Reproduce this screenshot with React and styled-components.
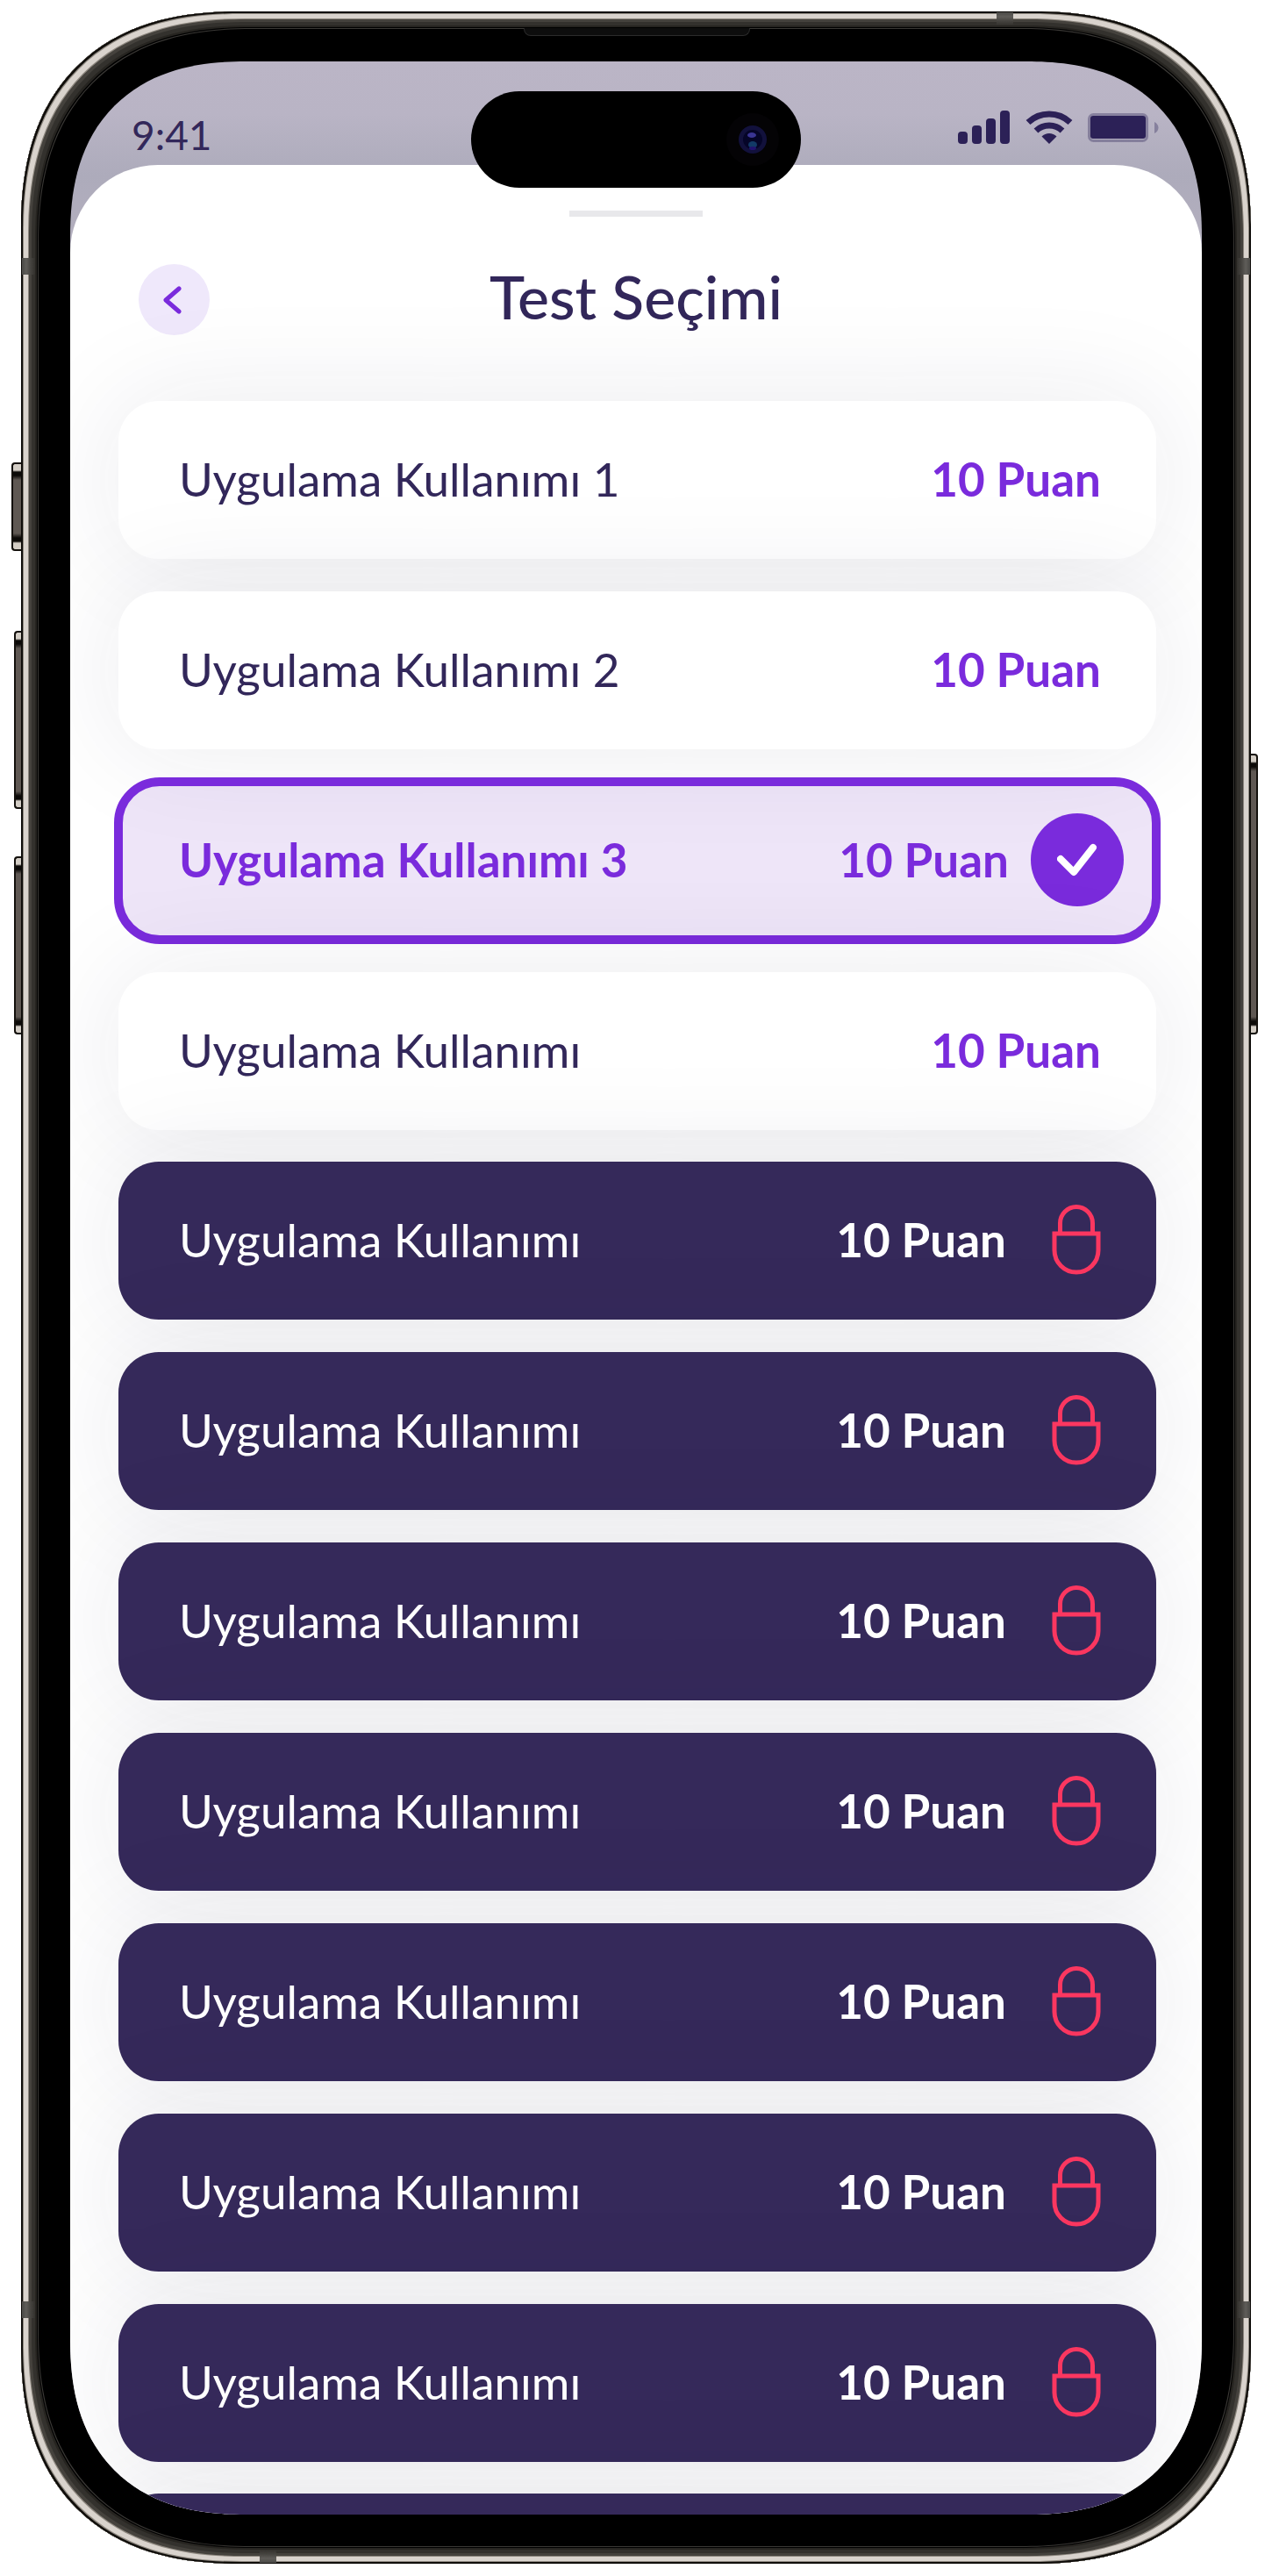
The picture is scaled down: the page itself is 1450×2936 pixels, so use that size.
import React, { useState } from 'react';
import styled, { createGlobalStyle, css } from 'styled-components';

const color = {
  ink: '#32275a',
  night: '#35295a',
  violet: '#7a2bdc',
  coral: '#fb3760',
};

const GlobalStyle = createGlobalStyle`
  *, *::before, *::after { box-sizing: border-box; }
  body {
    margin: 0;
    background: #fff;
    color: ${color.ink};
    font-family: Lato, "Open Sans", sans-serif;
  }
  button { font: inherit; color: inherit; border: 0; }
`;

const Page = styled.div`
  display: flex;
  height: 100vh;
  min-height: 1200px;
  padding: 13px 24px 14px;
`;

const Device = styled.div`
  position: relative;
  display: flex;
  flex: 1;
  min-width: 0;
  padding: 57px 56px 56px;
`;

const Body = styled.div`
  position: absolute;
  inset: 0;
  border-radius: 220px;
  background: #000;
  box-shadow:
    inset 0 0 0 2px #0f0d0a,
    inset 0 0 0 3px #8d877f,
    inset 0 0 0 8px #d9d3cd,
    inset 0 0 0 9px #8d877f,
    inset 0 0 0 12px #45423d,
    inset 0 0 0 16px #33312d,
    inset 0 0 0 18px #262420,
    inset 0 0 0 19px #000,
    inset 0 0 0 20px #3a3835;
  @supports (corner-shape: superellipse(1.25)) {
    border-radius: 250px;
    corner-shape: superellipse(1.25);
  }
`;

const SideKey = styled.span`
  position: absolute;
  ${(p) => p.$side}: -${(p) => p.$depth}px;
  top: ${(p) => p.$top}px;
  width: ${(p) => p.$depth + 1}px;
  height: ${(p) => p.$length}px;
  border: 2px solid #14110d;
  ${(p) => (p.$side === 'left' ? 'border-right: 0' : 'border-left: 0')};
  border-radius: ${(p) => (p.$side === 'left' ? '4px 0 0 4px' : '0 4px 4px 0')};
  background: linear-gradient(
    #d3cdc5 0 7px, #0c0a08 9px 13px, #5f5853 18px,
    #5f5853 calc(100% - 18px), #0c0a08 calc(100% - 13px) calc(100% - 9px), #d3cdc5 calc(100% - 7px)
  );
`;

const Antenna = styled.span`
  position: absolute;
  ${(p) => p.$edge}: 1px;
  background: linear-gradient(
    to ${(p) => ({ left: 'right', right: 'left', top: 'bottom', bottom: 'top' })[p.$edge]},
    #4a4946, #5f5d59 5px, #45433f 10px, #33312d
  );
  ${(p) => (p.$edge === 'left' || p.$edge === 'right'
    ? css`width: 15px; height: 19px; ${p.$from}: ${p.$at}px;`
    : css`width: 19px; height: 15px; ${p.$from}: ${p.$at}px;`)}
`;

const Earpiece = styled.span`
  position: absolute;
  top: 19px;
  left: 50%;
  width: 258px;
  height: 9px;
  margin-left: -128px;
  border: 1px solid #2b2b2b;
  border-top: 0;
  border-radius: 0 0 8px 8px;
  background: #0d0d0d;
`;

const Screen = styled.main`
  position: relative;
  display: flex;
  flex: 1;
  flex-direction: column;
  min-width: 0;
  overflow: hidden;
  border-radius: 178px;
  background: linear-gradient(#bbb5c6 0, #b9b4c5 60px, #adabbb 130px, #b3afbe 200px);
  @supports (corner-shape: superellipse(1.25)) {
    border-radius: 200px;
    corner-shape: superellipse(1.25);
  }
`;

const StatusBar = styled.header`
  display: flex;
  flex: none;
  align-items: center;
  justify-content: space-between;
  height: 118px;
  padding: 34px 48px 0 70px;
`;

const Clock = styled.time`
  padding-top: 16px;
  font-size: 46px;
  line-height: 52px;
`;

const StatusIcons = styled.div`
  display: flex;
  gap: 17px;
  padding-bottom: 2px;
  color: #2c2157;
`;

const Island = styled.div`
  position: absolute;
  z-index: 2;
  top: 34px;
  left: 50%;
  display: flex;
  align-items: center;
  justify-content: flex-end;
  width: 376px;
  height: 110px;
  margin-left: -188px;
  padding-right: 25px;
  border-radius: 55px;
  background: #000;
`;

const Sheet = styled.section`
  display: flex;
  flex: 1;
  flex-direction: column;
  min-height: 0;
  border-radius: 100px 100px 0 0;
  background: #fff;
`;

const Handle = styled.span`
  flex: none;
  align-self: center;
  width: 152px;
  height: 7px;
  margin-top: 52px;
  background: #e8e8eb;
`;

const TitleBar = styled.div`
  display: grid;
  flex: none;
  grid-template-columns: 81px 1fr 81px;
  align-items: center;
  margin-top: 54px;
  padding: 0 78px;
`;

const BackButton = styled.button`
  display: grid;
  place-items: center;
  width: 81px;
  height: 81px;
  padding: 0;
  border-radius: 50%;
  background: #efe8fb;
  color: ${color.violet};
`;

const Title = styled.h1`
  margin: 0;
  padding-bottom: 8px;
  font-size: 68px;
  font-weight: 500;
  line-height: 72px;
  text-align: center;
`;

const Groups = styled.div`
  display: flex;
  flex: 1;
  flex-direction: column;
  gap: 36px;
  min-height: 0;
  padding: 75px 52px 0 55px;
`;

const TestList = styled.ul`
  display: flex;
  flex: none;
  flex-direction: column;
  gap: 37px;
  margin: 0;
  padding: 0;
  list-style: none;
`;

const TestItem = styled.li`
  display: flex;
  height: 180px;
`;

const kinds = {
  open: css`
    background: #fff;
    box-shadow: 0 0 130px rgba(32, 32, 64, 0.09);
  `,
  selected: css`
    margin: -5px;
    padding: 0 32px 2px 64px;
    border: 10px solid ${color.violet};
    border-radius: 52px;
    background: rgba(112, 43, 200, 0.12);
    color: ${color.violet};
    font-weight: 700;
  `,
  locked: css`
    background: ${color.night};
    box-shadow: 0 0 130px rgba(32, 32, 64, 0.09);
    color: #fff;
  `,
};

const TestButton = styled.button`
  display: flex;
  flex: 1;
  align-items: center;
  min-width: 0;
  padding: 0 63px 2px 69px;
  border-radius: 46px;
  font-size: 53px;
  line-height: 64px;
  text-align: left;
  ${(p) => kinds[p.$kind]}
`;

/* Top edge of the rows that continue below the fold. */
const NextRow = styled.div`
  flex: none;
  height: 180px;
  border-radius: 46px;
  background: ${color.night};
  box-shadow: 0 0 130px rgba(32, 32, 64, 0.09);
`;

const Name = styled.span`
  flex: 1;
`;

const Points = styled.span`
  color: ${(p) => (p.$kind === 'locked' ? '#fff' : color.violet)};
  font-weight: 700;
  margin-right: ${(p) => ({ open: 0, selected: 25, locked: 52 })[p.$kind]}px;
`;

const CheckBadge = styled.span`
  display: grid;
  place-items: center;
  width: 106px;
  height: 106px;
  border-radius: 50%;
  background: ${color.violet};
  color: #fff;
`;

const Signal = () => (
  <svg width="60" height="38" viewBox="0 0 60 38" fill="currentColor" aria-label="Sinyal">
    <rect x="0" y="24" width="11" height="14" rx="4" />
    <rect x="16" y="17" width="11" height="21" rx="4" />
    <rect x="32" y="9" width="11" height="29" rx="4" />
    <rect x="48" y="0" width="11" height="38" rx="4" />
  </svg>
);

const Wifi = () => (
  <svg width="54" height="38" viewBox="0 0 54 38" aria-label="Wi-Fi">
    <g fill="none" stroke="currentColor" strokeWidth="7">
      <path d="M3 13.5a35 35 0 0 1 48 0" />
      <path d="M12 23a22 22 0 0 1 30 0" />
    </g>
    <path d="M18.500 29.500a12 12 0 0 1 17 0L27 38z" fill="currentColor" />
  </svg>
);

const Battery = () => (
  <svg width="82" height="38" viewBox="0 0 82 38" aria-label="Pil">
    <rect x="1.500" y="4.500" width="66" height="30" rx="5" fill="none" stroke="currentColor" strokeOpacity=".35" strokeWidth="3" />
    <rect x="3" y="6" width="63" height="26" rx="3" fill="currentColor" />
    <path d="M76 13c6 3 6 10 0 13z" fill="currentColor" fillOpacity=".35" />
  </svg>
);

const Camera = () => (
  <svg width="60" height="60" viewBox="0 0 60 60" aria-hidden="true">
    <circle cx="30" cy="30" r="30" fill="#040305" />
    <circle cx="30" cy="30" r="16" fill="#12113c" />
    <circle cx="30" cy="30" r="11" fill="#050528" />
    <ellipse cx="29" cy="25" rx="5" ry="3" fill="#3a3594" />
    <ellipse cx="30" cy="36" rx="5" ry="4" fill="#123a66" />
    <ellipse cx="30" cy="40" rx="4" ry="2" fill="#221270" />
  </svg>
);

const ChevronLeft = () => (
  <svg width="26" height="32" viewBox="0 0 26 32" fill="none" stroke="currentColor" strokeWidth="5" strokeLinecap="round" strokeLinejoin="round" aria-hidden="true">
    <path d="M18 3 3 16l15 13" />
  </svg>
);

const Check = () => (
  <svg width="46" height="38" viewBox="0 0 46 38" fill="none" stroke="currentColor" strokeWidth="8" strokeLinecap="round" strokeLinejoin="round" aria-hidden="true">
    <path d="m4 18 15 15L41 5" />
  </svg>
);

const Lock = () => (
  <svg width="56" height="80" viewBox="0 0 56 80" fill="none" stroke={color.coral} strokeWidth="5" aria-label="Kilitli">
    <path d="M9.500 33V21a18.500 18.500 0 0 1 37 0v12" />
    <path d="M3 33h50v19a25 25 0 0 1-50 0z" />
  </svg>
);

const openTests = ['Uygulama Kullanımı 1', 'Uygulama Kullanımı 2', 'Uygulama Kullanımı 3', 'Uygulama Kullanımı'];
const lockedTests = Array.from({ length: 7 }, () => 'Uygulama Kullanımı');

function TestRow({ kind, name, onSelect }) {
  return (
    <TestItem>
      <TestButton
        type="button"
        $kind={kind}
        disabled={kind === 'locked'}
        aria-pressed={kind === 'selected'}
        onClick={onSelect}
      >
        <Name>{name}</Name>
        <Points $kind={kind}>10 Puan</Points>
        {kind === 'selected' && <CheckBadge><Check /></CheckBadge>}
        {kind === 'locked' && <Lock />}
      </TestButton>
    </TestItem>
  );
}

export default function App() {
  const [selected, setSelected] = useState(2);
  return (
    <>
      <GlobalStyle />
      <Page>
        <Device>
          <SideKey $side="left" $depth={11} $top={514} $length={101} />
          <SideKey $side="left" $depth={8} $top={706} $length={203} />
          <SideKey $side="left" $depth={8} $top={963} $length={203} />
          <SideKey $side="right" $depth={8} $top={846} $length={320} />
          <Body />
          <Antenna $edge="left" $from="top" $at={281} />
          <Antenna $edge="right" $from="top" $at={281} />
          <Antenna $edge="left" $from="bottom" $at={280} />
          <Antenna $edge="right" $from="bottom" $at={280} />
          <Antenna $edge="top" $from="right" $at={271} />
          <Antenna $edge="bottom" $from="left" $at={272} />
          <Earpiece />
          <Screen>
            <StatusBar>
              <Clock>9:41</Clock>
              <StatusIcons>
                <Signal />
                <Wifi />
                <Battery />
              </StatusIcons>
            </StatusBar>
            <Island><Camera /></Island>
            <Sheet>
              <Handle />
              <TitleBar>
                <BackButton type="button" aria-label="Geri"><ChevronLeft /></BackButton>
                <Title>Test Seçimi</Title>
              </TitleBar>
              <Groups>
                <TestList>
                  {openTests.map((name, i) => (
                    <TestRow key={i} name={name} kind={i === selected ? 'selected' : 'open'} onSelect={() => setSelected(i)} />
                  ))}
                </TestList>
                <TestList>
                  {lockedTests.map((name, i) => <TestRow key={i} name={name} kind="locked" />)}
                </TestList>
                <NextRow />
              </Groups>
            </Sheet>
          </Screen>
        </Device>
      </Page>
    </>
  );
}
